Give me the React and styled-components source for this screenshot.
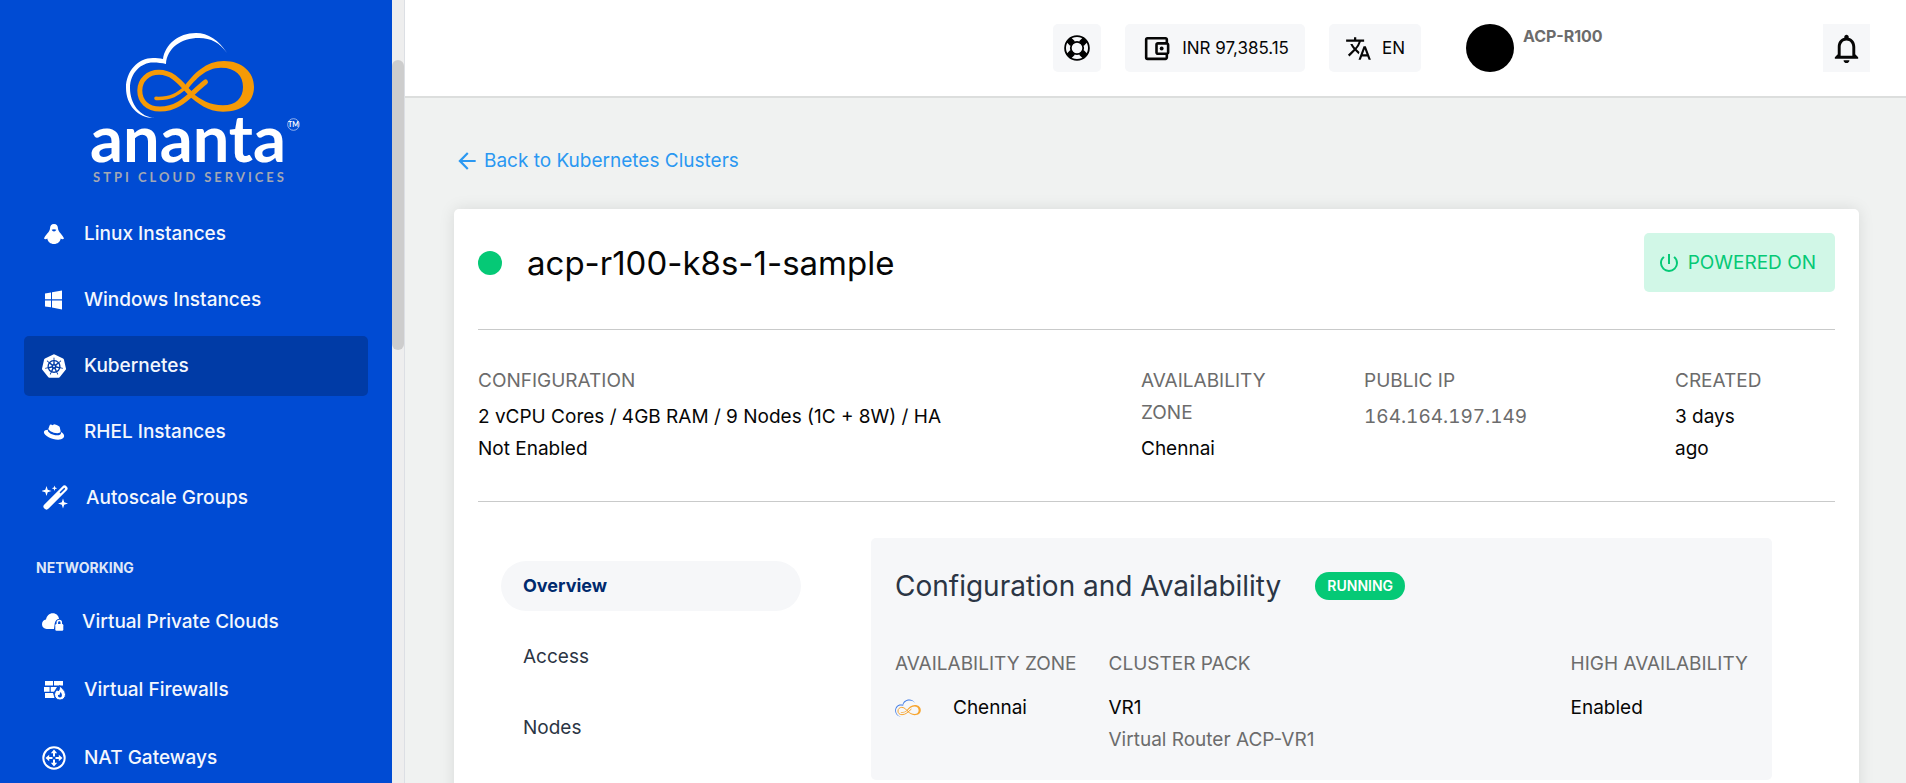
import React from "react";
import styled, { createGlobalStyle, css } from "styled-components";
import {
  MdArrowBack,
  MdNotificationsNone,
  MdOutlineAccountBalanceWallet,
  MdPowerSettingsNew,
  MdTranslate,
} from "react-icons/md";
import { SiKubernetes } from "react-icons/si";
import { FaRedhat } from "react-icons/fa";

const color = {
  sidebar: "#004bd3",
  sidebarActive: "#003ba6",
  orange: "#f59a06",
  page: "#f0f2f1",
  soft: "#f6f7f9",
  rule: "#c9caca",
  muted: "#6c6c6c",
  slate: "#2b3544",
  green: "#05c976",
  mint: "#d1f7e7",
  link: "#2a98f2",
  navy: "#002a6e",
};

const GlobalStyle = createGlobalStyle`
  *, *::before, *::after { box-sizing: border-box; }
  body {
    margin: 0;
    font-family: Inter, "Liberation Sans", sans-serif;
    font-size: 19px;
    line-height: 32px;
    color: #060606;
    background: ${color.page};
  }
  h1, h2, h3, p, dl, dt, dd, ul { margin: 0; padding: 0; font-weight: 400; }
  ul { list-style: none; }
  a { color: inherit; text-decoration: none; }
  button { font: inherit; color: inherit; border: 0; padding: 0; cursor: pointer; }
  svg { display: block; flex: none; }
`;

const Shell = styled.div`
  display: flex;
  height: 100vh;
  overflow: hidden;
`;

/* ---------- sidebar ---------- */

const Sidebar = styled.aside`
  flex: 0 0 392px;
  overflow: hidden;
  padding: 30px 24px 0;
  background: ${color.sidebar};
  color: #f4f7fd;
`;

const Brand = styled.a`
  display: block;
  margin: 0 0 18px 64px;
`;

const NavList = styled.ul`
  display: flex;
  flex-direction: column;
  gap: ${(p) => p.$gap}px;
`;

const NavLink = styled.a`
  display: flex;
  align-items: center;
  gap: 18px;
  height: 60px;
  padding-left: 18px;
  border-radius: 5px;
  font-weight: 500;
  background: ${(p) => (p.$active ? color.sidebarActive : "transparent")};
`;

const NavHeading = styled.h2`
  padding: 24px 0 8px 12px;
  font-size: 14px;
  font-weight: 700;
  line-height: 32px;
  color: #dfe7f7;
`;

const ScrollTrack = styled.div`
  flex: 0 0 13px;
  padding-top: 60px;
  border-right: 1px solid #dcdfe4;
  background: #eeeeee;
`;

const ScrollThumb = styled.div`
  width: 12px;
  height: 290px;
  border-radius: 6px;
  background: #cdcdcd;
`;

/* ---------- header ---------- */

const Main = styled.div`
  flex: 1;
  min-width: 0;
  display: flex;
  flex-direction: column;
`;

const Header = styled.header`
  flex: none;
  display: flex;
  justify-content: flex-end;
  align-items: center;
  gap: 24px;
  height: 98px;
  padding-right: 36px;
  border-bottom: 2px solid #dcdedd;
  background: #fff;
`;

const HeaderButton = styled.button`
  display: flex;
  align-items: center;
  justify-content: center;
  gap: 10px;
  height: 48px;
  min-width: ${(p) => (p.$square ? 47 : 48)}px;
  padding: 0 ${(p) => (p.$wide ? 16 : 0)}px;
  border-radius: ${(p) => (p.$square ? 0 : 5)}px;
  background: ${color.soft};
  font-size: 17px;
`;

const Account = styled.div`
  display: flex;
  gap: 9px;
  width: 333px;
  margin-left: 21px;
`;

const Avatar = styled.span`
  width: 48px;
  height: 48px;
  border-radius: 50%;
  background: #000;
`;

const AccountName = styled.span`
  font-size: 16px;
  font-weight: 700;
  line-height: 24px;
  color: ${color.muted};
`;

/* ---------- content ---------- */

const Content = styled.main`
  flex: 1;
  min-height: 0;
  overflow: hidden;
  padding: 47px 47px 0 49px;
`;

const BackLink = styled.a`
  display: flex;
  align-items: center;
  gap: 4px;
  width: fit-content;
  color: ${color.link};
`;

const Card = styled.section`
  margin-top: 32px;
  padding: 24px 24px 60px;
  border-radius: 5px;
  background: #fff;
  box-shadow: 0 0 16px rgba(0, 0, 0, 0.1);
`;

const TitleRow = styled.div`
  display: flex;
  align-items: center;
  height: 97px;
  padding-bottom: 37px;
  border-bottom: 1px solid ${color.rule};
`;

const StatusDot = styled.span`
  width: 24px;
  height: 24px;
  margin-right: 25px;
  border-radius: 50%;
  background: ${color.green};
`;

const Title = styled.h1`
  flex: 1;
  font-size: 33px;
  line-height: 48px;
`;

const PowerButton = styled.button`
  display: flex;
  align-items: center;
  gap: 7px;
  height: 59px;
  padding: 0 19px 0 13px;
  border-radius: 5px;
  background: ${color.mint};
  color: ${color.green};
`;

const Facts = styled.dl`
  display: grid;
  grid-template-columns: 663fr 223fr 311fr 160fr;
  padding: 35px 0 36px;
  border-bottom: 1px solid ${color.rule};
`;

const Fact = styled.div`
  padding-right: 68px;
`;

const Label = styled.dt`
  color: ${color.muted};
`;

const Value = styled.dd`
  margin-top: 4px;
  font-variant-numeric: ${(p) => (p.$muted ? "tabular-nums" : "normal")};
  color: ${(p) => (p.$muted ? color.muted : "inherit")};
`;

const ConfigValue = styled(Value)`
  max-width: 500px;
`;

const Body = styled.div`
  display: grid;
  grid-template-columns: 300px 1fr;
  gap: 70px;
  padding: 36px 63px 0 23px;
`;

const Tabs = styled.nav`
  display: flex;
  flex-direction: column;
  gap: 21px;
  padding-top: 23px;
`;

const Tab = styled.button`
  height: 50px;
  padding: 0 22px;
  border-radius: 25px;
  text-align: left;
  color: ${color.slate};
  background: transparent;
  ${(p) =>
    p.$active &&
    css`
      font-size: 18px;
      font-weight: 700;
      color: ${color.navy};
      background: ${color.soft};
    `}
`;

const Panel = styled.section`
  height: 242px;
  padding: 32px 24px 0;
  border-radius: 5px;
  background: ${color.soft};
`;

const PanelHead = styled.div`
  display: flex;
  align-items: center;
  gap: 34px;
`;

const PanelTitle = styled.h2`
  font-size: 28px;
  line-height: 32px;
  color: ${color.slate};
`;

const Badge = styled.span`
  height: 28px;
  padding: 0 12px;
  border-radius: 14px;
  background: ${color.green};
  color: #fff;
  font-size: 14px;
  font-weight: 600;
  line-height: 28px;
`;

const PanelFacts = styled.dl`
  display: grid;
  grid-template-columns: auto 1fr auto;
  gap: 32px;
  padding-top: 46px;
  white-space: nowrap;
`;

const PanelValue = styled.dd`
  display: flex;
  align-items: center;
  gap: 32px;
  margin: 12px 0 0;
`;

const PanelNote = styled.dd`
  margin: 0;
  color: ${color.muted};
`;

/* ---------- drawings ---------- */

const CloudMark = ({ cloud, loop }) => (
  <>
    <path
      fill={cloud}
      d="M227 53C219 40 208 33 196 33C178 33 165 45 163 59C160 58.3 156 58 153 58C138 58 126 71 126 88C126 105 138 118.5 155 118C140 117 130 104 130 88C130 73 141 62.5 153 62.5C158 62.5 162 63 166 64C167 48 181 38 199 38C211 38 220 43 227 53Z"
    />
    <path
      fill={loop}
      fillRule="evenodd"
      d="M183 88C194 73 206 61 224 61C242 61 254 72 254 87C254 102 242 111.7 223 111.7C207 111.7 198 103 189 96L192 92.5C201 100 210 105.3 223 105.3C236 105.3 243 98 243 87C243 76 236 67.8 221 67.8C206 67.8 196 79 187 90Z"
    />
    <path
      fill="none"
      stroke={loop}
      strokeWidth="5"
      strokeLinecap="round"
      d="M205.500 82C189 95 180 109 160 109C147 109 139.800 101 139.800 90.500C139.800 80 148 72.300 159 72.300C175 72.300 183 87 192 95"
    />
    <path fill="none" stroke={loop} strokeWidth="3.6" strokeLinecap="round" d="M156 98.400C171 99 178 94 186 87" />
  </>
);

const Logo = () => (
  <svg width="215" height="156" viewBox="88 30 215 156" role="img" aria-label="ananta STPI Cloud Services">
    <CloudMark cloud="#fff" loop={color.orange} />
    <text x="90" y="162" fontFamily="Lato, sans-serif" fontWeight="700" fontSize="65" fill="#fff">ananta</text>
    <circle cx="293.500" cy="124.500" r="5.800" fill="none" stroke="#b9ccf3" strokeWidth="0.800" />
    <text x="293.500" y="127" textAnchor="middle" fontFamily="Lato, sans-serif" fontWeight="700" fontSize="7" fill="#fff">TM</text>
    <text x="93" y="182" fontFamily="Lato, sans-serif" fontWeight="700" fontSize="13" letterSpacing="3" fill="#a3a8b3">STPI CLOUD SERVICES</text>
  </svg>
);

const CloudIcon = () => (
  <svg width="26" height="18" viewBox="125 32 130 87" aria-hidden="true">
    <CloudMark cloud="#3f7be6" loop="#f7a530" />
  </svg>
);

const PenguinIcon = () => (
  <svg width="24" height="20" viewBox="-2 0 24 20" aria-hidden="true">
    <path fill="#fff" d="M10 0C7.300 0 6 1.800 6 4.500C5.800 8 1.500 10.500 0 14.500C1 15.600 2.400 15.200 3.300 14.500C3.800 17.800 6.500 20 10 20C13.500 20 16.200 17.800 16.700 14.500C17.600 15.200 19 15.600 20 14.500C18.500 10.500 14.200 8 14 4.500C14 1.800 12.700 0 10 0Z" />
    <path fill={color.sidebar} d="M7.600 5.800Q10 4.800 12.400 5.800Q11.500 7.600 10 7.600Q8.500 7.600 7.600 5.800Z" />
  </svg>
);

const WindowsIcon = () => (
  <svg width="24" height="20" viewBox="-3 0 24 20" aria-hidden="true">
    <path fill="#fff" d="M0 3.400L6 2.500V9.300H0ZM7 2.300L17 0.500V9.300H7ZM0 10.500H6V17.300L0 16.400ZM7 10.500H17V19.500L7 17.500Z" />
  </svg>
);

const WandIcon = () => (
  <svg width="26" height="26" viewBox="0 0 26 26" aria-hidden="true" fill="#fff">
    <path d="M4.500 21.500L22.500 3.500" stroke="#fff" strokeWidth="6" strokeLinecap="round" />
    <path d="M18.500 7.500L22.300 3.700" stroke={color.sidebar} strokeWidth="1.600" strokeLinecap="round" />
    <path d="M4.500 1L5.700 4.800L9.500 6L5.700 7.200L4.500 11L3.300 7.200L-0.500 6L3.300 4.800ZM12.500 0.500L13.200 2.600L15.200 3.300L13.200 4L12.500 6L11.800 4L9.800 3.300L11.800 2.600ZM21 13.500L22.200 17.300L26 18.500L22.200 19.700L21 23.500L19.800 19.700L16 18.500L19.800 17.300Z" />
  </svg>
);

const CloudLockIcon = () => (
  <svg width="22" height="18" viewBox="0 0 22 18" aria-hidden="true">
    <path fill="#fff" d="M4.700 16C2 16 0 14 0 11.300C0 8.900 1.700 7 4 6.600C4.700 2.800 7.300 0.200 10.800 0.200C14.300 0.200 16.500 2.500 17.100 5.800C15 6 13 8 12.700 10.500L12 16Z" />
    <path fill="none" stroke="#fff" strokeWidth="1.500" d="M15.300 11.500V9.700C15.300 6.900 19.300 6.900 19.300 9.700V11.500" />
    <rect x="13.300" y="11" width="8" height="6.800" rx="1.200" fill="#fff" />
  </svg>
);

const FirewallIcon = () => (
  <svg width="24" height="20" viewBox="-2 0 24 20" aria-hidden="true">
    <path fill="#fff" d="M1 1H9V5.600H1ZM10 1H19V5.600H10ZM0 6.900H5.600V11.700H0ZM6.700 6.900H13L10 11.700H6.700ZM1 13H9L10.500 18H1Z" />
    <path fill="#fff" stroke={color.sidebar} strokeWidth="1" d="M15.700 5.500C17 8 21.500 10 21.500 14.500C21.500 17.600 19.200 20 16 20C12.800 20 10.500 17.600 10.500 14.500C10.500 12 12.500 10.800 13 9.500L14.300 11C15.500 9.500 16 7.500 15.700 5.500Z" />
    <path fill={color.sidebar} d="M16 17.500C14.500 17.500 13.700 16.300 14 14.800L15.300 15.300L16.500 12C18.500 14 18.500 17.500 16 17.500Z" />
  </svg>
);

const GatewayIcon = () => (
  <svg width="24" height="24" viewBox="0 0 24 24" aria-hidden="true">
    <circle cx="12" cy="12" r="10.700" fill="none" stroke="#fff" strokeWidth="2" />
    <path fill="#fff" d="M12 3.500L15.200 7.200H13V10.500H11V7.200H8.800ZM12 20.500L8.800 16.800H11V13.500H13V16.800H15.200ZM3.500 12L7.200 8.800V11H10.500V13H7.200V15.200ZM20.500 12L16.800 15.200V13H13.500V11H16.800V8.800Z" />
  </svg>
);

const LifebuoyIcon = () => (
  <svg width="26" height="26" viewBox="0 0 26 26" fill="none" stroke="#000" aria-hidden="true">
    <circle cx="13" cy="13" r="11.900" strokeWidth="1.800" />
    <circle cx="13" cy="13" r="6.200" strokeWidth="1.800" />
    <path strokeWidth="6.500" d="M4.800 4.800L8.600 8.600M21.200 4.800L17.400 8.600M4.800 21.200L8.600 17.400M21.200 21.200L17.400 17.400" />
  </svg>
);

const compute = [
  { label: "Linux Instances", icon: <PenguinIcon /> },
  { label: "Windows Instances", icon: <WindowsIcon /> },
  { label: "Kubernetes", icon: <SiKubernetes size={24} color="#fff" />, active: true },
  { label: "RHEL Instances", icon: <FaRedhat size={24} color="#fff" viewBox="-48 -48 608 608" /> },
  { label: "Autoscale Groups", icon: <WandIcon /> },
];

const networking = [
  { label: "Virtual Private Clouds", icon: <CloudLockIcon /> },
  { label: "Virtual Firewalls", icon: <FirewallIcon /> },
  { label: "NAT Gateways", icon: <GatewayIcon /> },
];

const NavGroup = ({ items, gap }) => (
  <NavList $gap={gap}>
    {items.map((item) => (
      <li key={item.label}>
        <NavLink href="#" $active={item.active} aria-current={item.active ? "page" : undefined}>
          {item.icon}
          {item.label}
        </NavLink>
      </li>
    ))}
  </NavList>
);

export default function App() {
  return (
    <Shell>
      <GlobalStyle />
      <Sidebar>
        <Brand href="#">
          <Logo />
        </Brand>
        <NavGroup items={compute} gap={6} />
        <NavHeading>NETWORKING</NavHeading>
        <NavGroup items={networking} gap={8} />
      </Sidebar>
      <ScrollTrack>
        <ScrollThumb />
      </ScrollTrack>

      <Main>
        <Header>
          <HeaderButton aria-label="Support">
            <LifebuoyIcon />
          </HeaderButton>
          <HeaderButton $wide>
            <MdOutlineAccountBalanceWallet size={31} />
            INR 97,385.15
          </HeaderButton>
          <HeaderButton $wide>
            <MdTranslate size={27} />
            EN
          </HeaderButton>
          <Account>
            <Avatar />
            <AccountName>ACP-R100</AccountName>
          </Account>
          <HeaderButton $square aria-label="Notifications">
            <MdNotificationsNone size={35} />
          </HeaderButton>
        </Header>

        <Content>
          <BackLink href="#">
            <MdArrowBack size={26} />
            Back to Kubernetes Clusters
          </BackLink>

          <Card>
            <TitleRow>
              <StatusDot />
              <Title>acp-r100-k8s-1-sample</Title>
              <PowerButton>
                <MdPowerSettingsNew size={24} />
                POWERED ON
              </PowerButton>
            </TitleRow>

            <Facts>
              <Fact>
                <Label>CONFIGURATION</Label>
                <ConfigValue>2 vCPU Cores / 4GB RAM / 9 Nodes (1C + 8W) / HA Not Enabled</ConfigValue>
              </Fact>
              <Fact>
                <Label>AVAILABILITY ZONE</Label>
                <Value>Chennai</Value>
              </Fact>
              <Fact>
                <Label>PUBLIC IP</Label>
                <Value $muted>164.164.197.149</Value>
              </Fact>
              <Fact>
                <Label>CREATED</Label>
                <Value>3 days ago</Value>
              </Fact>
            </Facts>

            <Body>
              <Tabs>
                <Tab $active>Overview</Tab>
                <Tab>Access</Tab>
                <Tab>Nodes</Tab>
              </Tabs>
              <Panel>
                <PanelHead>
                  <PanelTitle>Configuration and Availability</PanelTitle>
                  <Badge>RUNNING</Badge>
                </PanelHead>
                <PanelFacts>
                  <div>
                    <Label>AVAILABILITY ZONE</Label>
                    <PanelValue>
                      <CloudIcon />
                      Chennai
                    </PanelValue>
                  </div>
                  <div>
                    <Label>CLUSTER PACK</Label>
                    <PanelValue>VR1</PanelValue>
                    <PanelNote>Virtual Router ACP-VR1</PanelNote>
                  </div>
                  <div>
                    <Label>HIGH AVAILABILITY</Label>
                    <PanelValue>Enabled</PanelValue>
                  </div>
                </PanelFacts>
              </Panel>
            </Body>
          </Card>
        </Content>
      </Main>
    </Shell>
  );
}
